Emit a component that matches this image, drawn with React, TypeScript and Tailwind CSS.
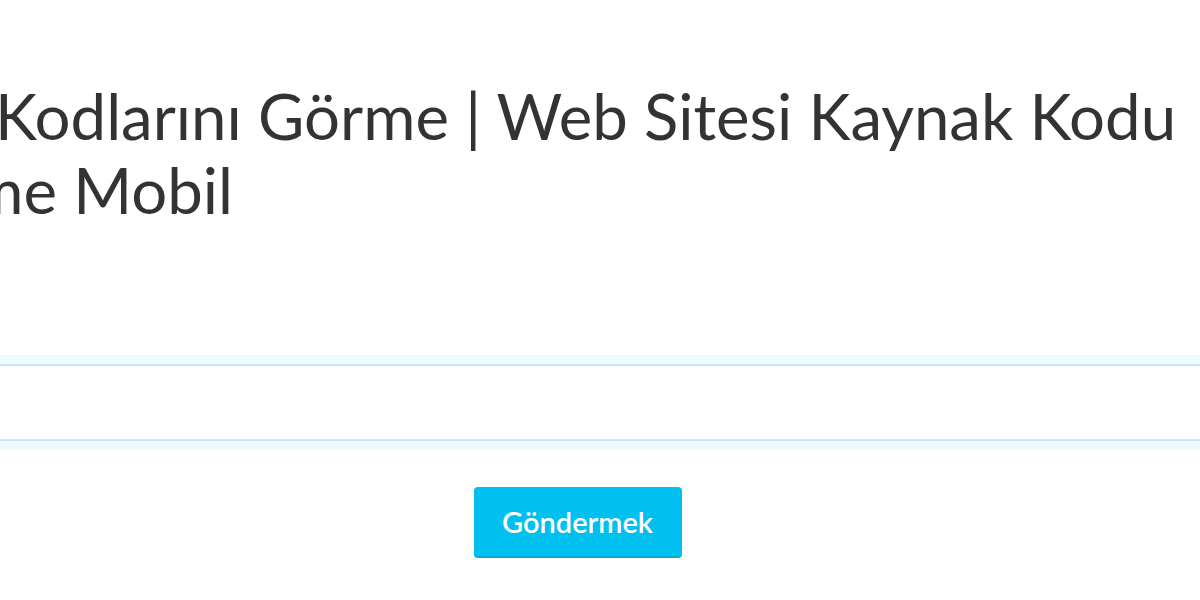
export default function App() {
    return (
        <div className="w-[1200px] h-[600px] overflow-hidden bg-white font-['Lato','Noto_Sans',sans-serif]">
            <h1 className="mt-[79px] -ml-[311px] indent-[85px] whitespace-nowrap text-[63.5px] leading-[74px] font-normal text-[#333333]">
                Kaynak Kodlarını Görme | Web Sitesi Kaynak Kodu
                <br />
                Görüntüleme Mobil
            </h1>

            <form className="-ml-[200px] w-[1555px] mt-[137px] flex flex-col items-center" onSubmit={(e) => e.preventDefault()}>
                <input
                    type="text"
                    className="w-full h-[77px] border-2 border-[#c6e7f3] bg-white shadow-[0_0_0_9px_#effaff] outline-none px-4 text-[20px]"
                />
                <button
                    type="submit"
                    className="mt-[46px] w-[208px] h-[71px] rounded-[4px] bg-[#00c0ef] border-b-2 border-[#00acd6] text-white text-[29px] font-semibold"
                >
                    Göndermek
                </button>
            </form>
        </div>
    );
}
